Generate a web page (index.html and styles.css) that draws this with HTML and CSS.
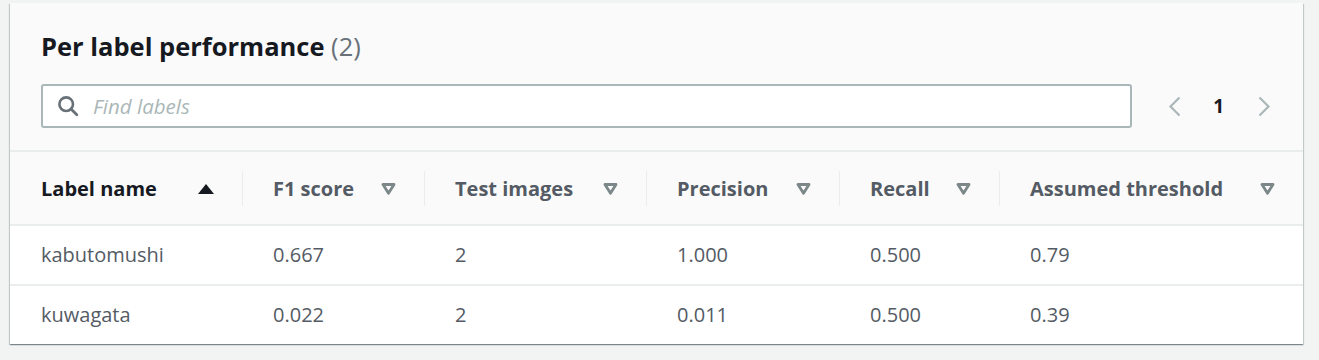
FILE: index.html
```html
<!DOCTYPE html>
<html lang="en">
<head>
<meta charset="utf-8">
<title>Per label performance</title>
<link rel="stylesheet" href="styles.css">
</head>
<body>
<div class="card">
  <div class="card-header">
    <h2 class="title">Per label performance <span class="count">(2)</span></h2>
    <div class="tools">
      <label class="search">
        <svg class="search-icon" width="22" height="22" viewBox="0 0 22 22" aria-hidden="true">
          <circle cx="9.2" cy="9.2" r="6.8" fill="none" stroke="#687078" stroke-width="2.6"/>
          <path d="M14 14 L19.8 19.8" stroke="#687078" stroke-width="2.8" stroke-linecap="round"/>
        </svg>
        <input type="text" placeholder="Find labels">
      </label>
      <div class="pager">
        <svg class="chev" width="13" height="21" viewBox="0 0 13 21" aria-hidden="true"><path d="M11.5 1.5 L2.5 10.5 L11.5 19.5" fill="none" stroke="#aab7b8" stroke-width="2.2"/></svg>
        <span class="page">1</span>
        <svg class="chev" width="13" height="21" viewBox="0 0 13 21" aria-hidden="true"><path d="M1.5 1.5 L10.5 10.5 L1.5 19.5" fill="none" stroke="#aab7b8" stroke-width="2.2"/></svg>
      </div>
    </div>
  </div>
  <table class="grid">
    <colgroup>
      <col class="c1"><col class="c2"><col class="c3"><col class="c4"><col class="c5"><col>
    </colgroup>
    <thead>
      <tr>
        <th><div class="th first sorted">Label name <span class="sort-up"></span></div></th>
        <th><div class="th">F1 score <svg class="sort-down" width="15" height="12" viewBox="0 0 15 12"><path d="M2 1.5 H13 L7.5 10.2 Z" fill="none" stroke="#7b8788" stroke-width="2.8" stroke-linejoin="round"/></svg></div></th>
        <th><div class="th">Test images <svg class="sort-down" width="15" height="12" viewBox="0 0 15 12"><path d="M2 1.5 H13 L7.5 10.2 Z" fill="none" stroke="#7b8788" stroke-width="2.8" stroke-linejoin="round"/></svg></div></th>
        <th><div class="th">Precision <svg class="sort-down" width="15" height="12" viewBox="0 0 15 12"><path d="M2 1.5 H13 L7.5 10.2 Z" fill="none" stroke="#7b8788" stroke-width="2.8" stroke-linejoin="round"/></svg></div></th>
        <th><div class="th">Recall <svg class="sort-down" width="15" height="12" viewBox="0 0 15 12"><path d="M2 1.5 H13 L7.5 10.2 Z" fill="none" stroke="#7b8788" stroke-width="2.8" stroke-linejoin="round"/></svg></div></th>
        <th><div class="th">Assumed threshold <svg class="sort-down" width="15" height="12" viewBox="0 0 15 12"><path d="M2 1.5 H13 L7.5 10.2 Z" fill="none" stroke="#7b8788" stroke-width="2.8" stroke-linejoin="round"/></svg></div></th>
      </tr>
    </thead>
    <tbody>
      <tr><td>kabutomushi</td><td>0.667</td><td>2</td><td>1.000</td><td>0.500</td><td>0.79</td></tr>
      <tr><td>kuwagata</td><td>0.022</td><td>2</td><td>0.011</td><td>0.500</td><td>0.39</td></tr>
    </tbody>
  </table>
</div>
</body>
</html>
```
FILE: styles.css
```css
* { box-sizing: border-box; }
html, body { margin: 0; }
body {
  background: #f2f3f3;
  padding: 3px 16px 14px 10px;
  font-family: "Open Sans", "Noto Sans", Arial, sans-serif;
  color: #545b64;
}
.card {
  background: #fafafa;
  box-shadow: 0 1px 1px 0 rgba(0,28,36,.3), 1px 1px 1px 0 rgba(0,28,36,.15), -1px 1px 1px 0 rgba(0,28,36,.15);
}
.card-header {
  padding: 26px 32px 22px 31px;
  border-bottom: 2px solid #eaeded;
}
.title {
  margin: 0;
  font-size: 25.5px;
  line-height: 34px;
  font-weight: 700;
  color: #16191f;
}
.count { font-weight: 400; color: #687078; }
.tools {
  margin-top: 21px;
  display: flex;
  align-items: center;
}
.search {
  flex: 1;
  height: 44px;
  display: flex;
  align-items: center;
  background: #fff;
  border: 2px solid #aab7b8;
  border-radius: 3px;
  padding-left: 14px;
}
.search-icon { flex: none; }
.search input {
  flex: 1;
  border: 0;
  outline: 0;
  background: transparent;
  font: italic 400 20.5px "Open Sans", sans-serif;
  color: #16191f;
  margin-left: 14px;
  padding: 0;
}
.search input::placeholder { color: #aab7b8; }
.pager {
  display: flex;
  align-items: center;
  margin-left: 36px;
}
.chev { display: block; }
.page {
  font-weight: 700;
  font-size: 19px;
  color: #16191f;
  margin: 0 34px 0 32px;
}
.grid {
  width: 100%;
  border-collapse: separate;
  border-spacing: 0;
  table-layout: fixed;
}
.c1 { width: 232px; }
.c2 { width: 182px; }
.c3 { width: 222px; }
.c4 { width: 193px; }
.c5 { width: 160px; }
.grid th {
  padding: 19px 0 18px;
  text-align: left;
  font-weight: 700;
  font-size: 20px;
  color: #545b64;
  border-bottom: 2px solid #eaeded;
}
.th {
  height: 35px;
  display: flex;
  align-items: center;
  justify-content: space-between;
  border-left: 1px solid #eaeded;
  padding-left: 30px;
  padding-right: 28px;
}
.th.first { border-left: 0; padding-left: 31px; }
.th.sorted { color: #16191f; }
.sort-up {
  width: 0; height: 0;
  border-left: 8px solid transparent;
  border-right: 8px solid transparent;
  border-bottom: 10px solid #16191f;
}
.sort-down { display: block; flex: none; }
.grid td {
  background: #fff;
  padding: 0 0 0 31px;
  line-height: 58px;
  font-size: 20px;
  color: #545b64;
}
.grid tbody tr + tr td { border-top: 2px solid #eaeded; }
```
